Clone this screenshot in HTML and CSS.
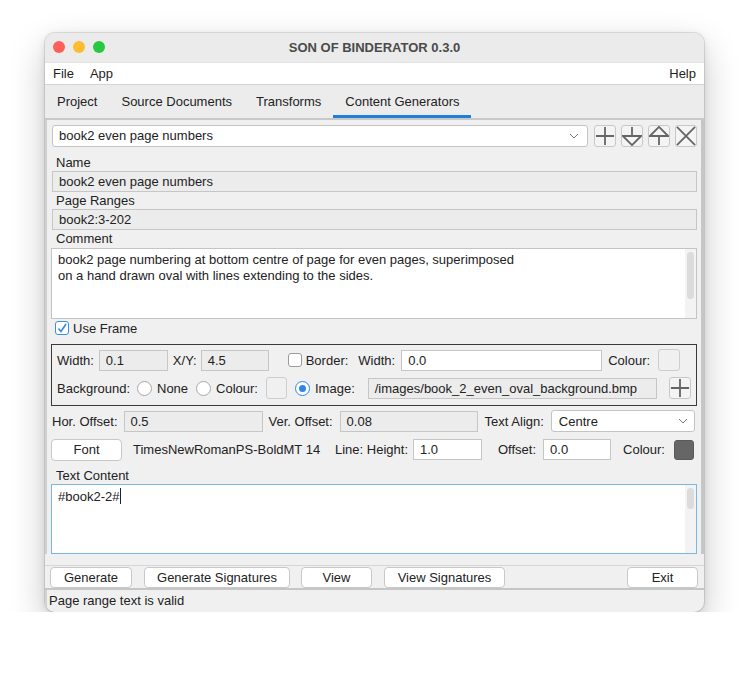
FILE: index.html
```html
<!DOCTYPE html>
<html>
<head>
<meta charset="utf-8">
<link rel="stylesheet" href="styles.css">
</head>
<body>
<div class="window">
  <div class="titlebar">
    <div class="lights"><span class="light red"></span><span class="light yellow"></span><span class="light green"></span></div>
    <div class="title">SON OF BINDERATOR 0.3.0</div>
  </div>
  <div class="menubar">
    <span class="menu">File</span><span class="menu">App</span><span class="spacer"></span><span class="menu">Help</span>
  </div>
  <div class="tabbar">
    <span class="tab">Project</span><span class="tab">Source Documents</span><span class="tab">Transforms</span><span class="tab active">Content Generators</span>
  </div>
  <div class="content">
    <div class="combo-row">
      <div class="combo"><span>book2 even page numbers</span><svg class="chev" width="10" height="6" viewBox="0 0 10 6"><path d="M1 1 L5 5 L9 1" fill="none" stroke="#777" stroke-width="1"/></svg></div>
      <div class="iconbtn"><svg width="22" height="22" viewBox="0 0 22 22"><path d="M11 1V21M1 11H21" stroke="#666" stroke-width="2" fill="none"/></svg></div>
      <div class="iconbtn"><svg width="22" height="22" viewBox="0 0 22 22"><path d="M11 1V11M1 11H21L11 21Z" stroke="#666" stroke-width="2" fill="none" stroke-linejoin="miter"/></svg></div>
      <div class="iconbtn"><svg width="22" height="22" viewBox="0 0 22 22"><path d="M11 21V11M1 11H21L11 1Z" stroke="#666" stroke-width="2" fill="none"/></svg></div>
      <div class="iconbtn"><svg width="22" height="22" viewBox="0 0 22 22"><path d="M1 1L21 21M21 1L1 21" stroke="#666" stroke-width="2" fill="none"/></svg></div>
    </div>
    <div class="label first">Name</div>
    <div class="field ro">book2 even page numbers</div>
    <div class="label">Page Ranges</div>
    <div class="field ro">book2:3-202</div>
    <div class="label">Comment</div>
    <div class="textarea comment">
      <div class="ta-text">book2 page numbering at bottom centre of page for even pages, superimposed<br>on a hand drawn oval with lines extending to the sides.</div>
      <div class="track"><div class="thumb thumb-comment"></div></div>
    </div>
    <div class="check-row">
      <span class="checkbox checked"><svg width="12" height="12" viewBox="0 0 12 12"><path d="M2.5 6.5 L5 9.5 L10 2" fill="none" stroke="#2f86e8" stroke-width="1.6"/></svg></span>
      <span>Use Frame</span>
    </div>
    <div class="frame">
      <div class="frow">
        <span>Width:</span>
        <span class="field gray w69 ml5">0.1</span>
        <span class="ml5">X/Y:</span>
        <span class="field gray w68 ml4">4.5</span>
        <span class="checkbox ml19"></span>
        <span class="ml4">Border:</span>
        <span class="ml10">Width:</span>
        <span class="field white w201 ml6">0.0</span>
        <span class="ml6">Colour:</span>
        <span class="swatch ml8"></span>
      </div>
      <div class="frow">
        <span>Background:</span>
        <span class="radio ml7"></span>
        <span class="ml5">None</span>
        <span class="radio ml8"></span>
        <span class="ml5">Colour:</span>
        <span class="swatch sm ml8"></span>
        <span class="radio sel ml8"></span>
        <span class="ml5">Image:</span>
        <span class="field gray w289 ml13">/images/book_2_even_oval_background.bmp</span>
        <span class="iconbtn ml12"><svg width="22" height="22" viewBox="0 0 22 22"><path d="M11 1V21M1 11H21" stroke="#666" stroke-width="2" fill="none"/></svg></span>
      </div>
    </div>
    <div class="orow">
      <span>Hor. Offset:</span>
      <span class="field gray w139 ml6">0.5</span>
      <span class="ml6">Ver. Offset:</span>
      <span class="field gray w138 ml7">0.08</span>
      <span class="ml7">Text Align:</span>
      <div class="select ml7"><span>Centre</span><svg class="chev" width="10" height="6" viewBox="0 0 10 6"><path d="M1 1 L5 5 L9 1" fill="none" stroke="#777" stroke-width="1"/></svg></div>
    </div>
    <div class="fontrow">
      <span class="button fontbtn">Font</span>
      <span class="fontname">TimesNewRomanPS-BoldMT 14</span>
      <span>Line: Height:</span>
      <span class="field white w69 ml5">1.0</span>
      <span class="ml16">Offset:</span>
      <span class="field white w68 ml7">0.0</span>
      <span class="ml12">Colour:</span>
      <span class="swatch dark ml9"></span>
    </div>
    <div class="label tc">Text Content</div>
    <div class="textarea focus">
      <div class="ta-text">#book2-2#<span class="caret"></span></div>
      <div class="track"><div class="thumb thumb-text"></div></div>
    </div>
  </div>
  <div class="buttonbar">
    <span class="button b1">Generate</span>
    <span class="button b2">Generate Signatures</span>
    <span class="button b3">View</span>
    <span class="button b4">View Signatures</span>
    <span class="spacer"></span>
    <span class="button b5">Exit</span>
  </div>
  <div class="status">Page range text is valid</div>
</div>
</body>
</html>
```
FILE: styles.css
```css
* { box-sizing: border-box; }
html, body { margin: 0; padding: 0; background: #ffffff; }
body {
  font-family: "Liberation Sans", Arial, sans-serif;
  font-size: 13px;
  color: #222222;
  padding: 33px 0 0 45px;
}
.window {
  width: 659px;
  height: 579px;
  border-radius: 10px;
  overflow: hidden;
  background: #f0f0f0;
  box-shadow: 0 14px 36px rgba(0,0,0,0.22), 0 2px 8px rgba(0,0,0,0.10), 0 0 0 1px rgba(0,0,0,0.10);
  display: flex;
  flex-direction: column;
}
.titlebar {
  height: 29px;
  background: #ebebeb;
  display: flex;
  align-items: center;
  position: relative;
}
.lights { display: flex; gap: 8px; padding-left: 8px; }
.light { width: 12px; height: 12px; border-radius: 50%; display: block; }
.red { background: #fe5f57; }
.yellow { background: #febc2e; }
.green { background: #28c840; }
.title {
  position: absolute; left: 0; right: 0; top: 0; bottom: 0;
  display: flex; align-items: center; justify-content: center;
  font-weight: bold; color: #4a4a4a; font-size: 13px;
}
.menubar {
  height: 24px;
  background: #ffffff;
  border-top: 1px solid #e2e2e2;
  border-bottom: 1px solid #d4d4d4;
  display: flex;
  align-items: center;
  padding: 0 8px;
  color: #1e1e1e;
}
.menu { margin-right: 16px; }
.menu:last-child { margin-right: 0; }
.spacer { flex: 1; }
.tabbar {
  height: 35px;
  background: #ececec;
  border-bottom: 2px solid #c8c8c8;
  display: flex;
}
.tab {
  padding: 4px 12px 0 12px;
  display: flex;
  align-items: center;
  border-bottom: 3px solid transparent;
  color: #222;
}
.tab.active { border-bottom-color: #1f7fd6; }
.content {
  flex: 1;
  border-left: 2px solid #cfcfcf;
  border-right: 3px solid #c6c6c6;
  padding: 5px 4px 0 5px;
  display: flex;
  flex-direction: column;
}
.combo-row { display: flex; align-items: center; height: 22px; gap: 5px; }
.combo {
  width: 537px;
  height: 22px;
  background: #fff;
  border: 1px solid #c4c4c4;
  border-radius: 3px;
  display: flex;
  align-items: center;
  padding: 0 8px 0 6px;
  justify-content: space-between;
  margin-right: 1px;
}
.chev { display: block; }
.iconbtn {
  width: 22px; height: 22px;
  border: 1px solid #c8c8c8;
  border-radius: 3px;
  background: #f4f4f4;
  display: flex; align-items: center; justify-content: center;
  overflow: hidden;
  flex: none;
}
.iconbtn svg { display: block; }
.label { height: 17px; line-height: 17px; padding-left: 4px; color: #222; }
.label.first { margin-top: 7px; }
.field {
  height: 21px;
  border: 1px solid #c6c6c6;
  display: flex;
  align-items: center;
  padding-left: 6px;
  white-space: nowrap;
  overflow: hidden;
  flex: none;
}
.field.ro { background: #ececec; }
.field.gray { background: #ececec; }
.field.white { background: #fff; }
.textarea {
  display: flex;
  background: #fff;
  border: 1px solid #c4c4c4;
  margin-left: -1px;
}
.textarea.comment { height: 71px; margin-top: 1px; }
.textarea.focus { height: 70px; border-color: #7ab5e3; }
.ta-text { flex: 1; padding: 3px 6px; line-height: 16px; }
.track { width: 11px; background: #f3f3f3; padding: 3px 2px; }
.thumb { width: 7px; background: #dcdcdc; border-radius: 4px; }
.thumb-comment { height: 47px; }
.thumb-text { height: 21px; }
.caret { display: inline-block; width: 1px; height: 16px; background: #222; vertical-align: -3px; margin-left: 1px; }
.check-row { display: flex; align-items: center; height: 19px; padding-left: 3px; }
.check-row span:last-child { margin-left: 4px; }
.checkbox {
  width: 14px; height: 14px;
  border: 1px solid #9a9a9a;
  border-radius: 3px;
  background: #fff;
  display: inline-flex; align-items: center; justify-content: center;
  flex: none;
}
.checkbox.checked { border-color: #3b8ee8; }
.frame {
  margin-top: 6px;
  margin-left: -1px;
  height: 62px;
  border: 1px solid #3a3a3a;
  padding: 5px 5px 0 5px;
  display: flex;
  flex-direction: column;
  gap: 6px;
}
.frow { display: flex; align-items: center; height: 21px; }
.frow:last-child { height: 23px; }
.radio {
  width: 15px; height: 15px; border-radius: 50%;
  border: 1px solid #a8a8a8; background: #fff; flex: none;
  display: inline-flex; align-items: center; justify-content: center;
}
.radio.sel { border-color: #2f86e8; }
.radio.sel::after { content: ""; width: 7px; height: 7px; border-radius: 50%; background: #2f86e8; }
.swatch {
  width: 22px; height: 22px; border: 1px solid #cdcdcd; border-radius: 3px;
  background: #f0f0f0; flex: none;
}
.swatch.sm { width: 21px; }
.swatch.dark { width: 20px; height: 20px; background: #666666; border-color: #5a5a5a; }
.frow .iconbtn { margin-left: 12px; }
.orow { display: flex; align-items: center; height: 21px; margin-top: 5px; }
.select {
  width: 144px; height: 22px; background: #fff; border: 1px solid #c4c4c4; border-radius: 3px;
  display: flex; align-items: center; justify-content: space-between; padding: 0 6px 0 7px;
}
.fontrow { display: flex; align-items: center; height: 22px; margin-top: 7px; }
.button {
  height: 22px; background: #fff; border: 1px solid #c8c8c8; border-radius: 4px;
  display: inline-flex; align-items: center; justify-content: center; color: #222;
  flex: none;
}
.fontbtn { width: 71px; margin-left: -1px; }
.fontname { width: 202px; margin-left: 11px; }
.label.tc { height: 23px; line-height: 17px; padding-top: 6px; }
.buttonbar {
  height: 26px;
  border-top: 1px solid #d6d6d6;
  border-bottom: 2px solid #c6c6c6;
  display: flex; align-items: center;
  padding-left: 5px; padding-right: 6px;
  margin-top: 11px;
  padding-top: 1px;
}
.buttonbar .button { height: 21px; }
.b1 { width: 82px; }
.b2 { width: 146px; margin-left: 12px; }
.b3 { width: 71px; margin-left: 11px; }
.b4 { width: 121px; margin-left: 12px; }
.b5 { width: 71px; }
.status { height: 22px; display: flex; align-items: center; padding-left: 2px; padding-bottom: 1px; color: #222; border-left: 2px solid #d2d2d2; }
.w68 { width: 68px; } .w69 { width: 69px; } .w139 { width: 139px; } .w138 { width: 138px; }
.w201 { width: 201px; } .w289 { width: 289px; }
.ml4 { margin-left: 4px; } .ml5 { margin-left: 5px; } .ml6 { margin-left: 6px; } .ml7 { margin-left: 7px; }
.ml8 { margin-left: 8px; } .ml9 { margin-left: 9px; } .ml10 { margin-left: 10px; } .ml12 { margin-left: 12px; }
.ml13 { margin-left: 13px; } .ml16 { margin-left: 16px; } .ml19 { margin-left: 19px; }
```
